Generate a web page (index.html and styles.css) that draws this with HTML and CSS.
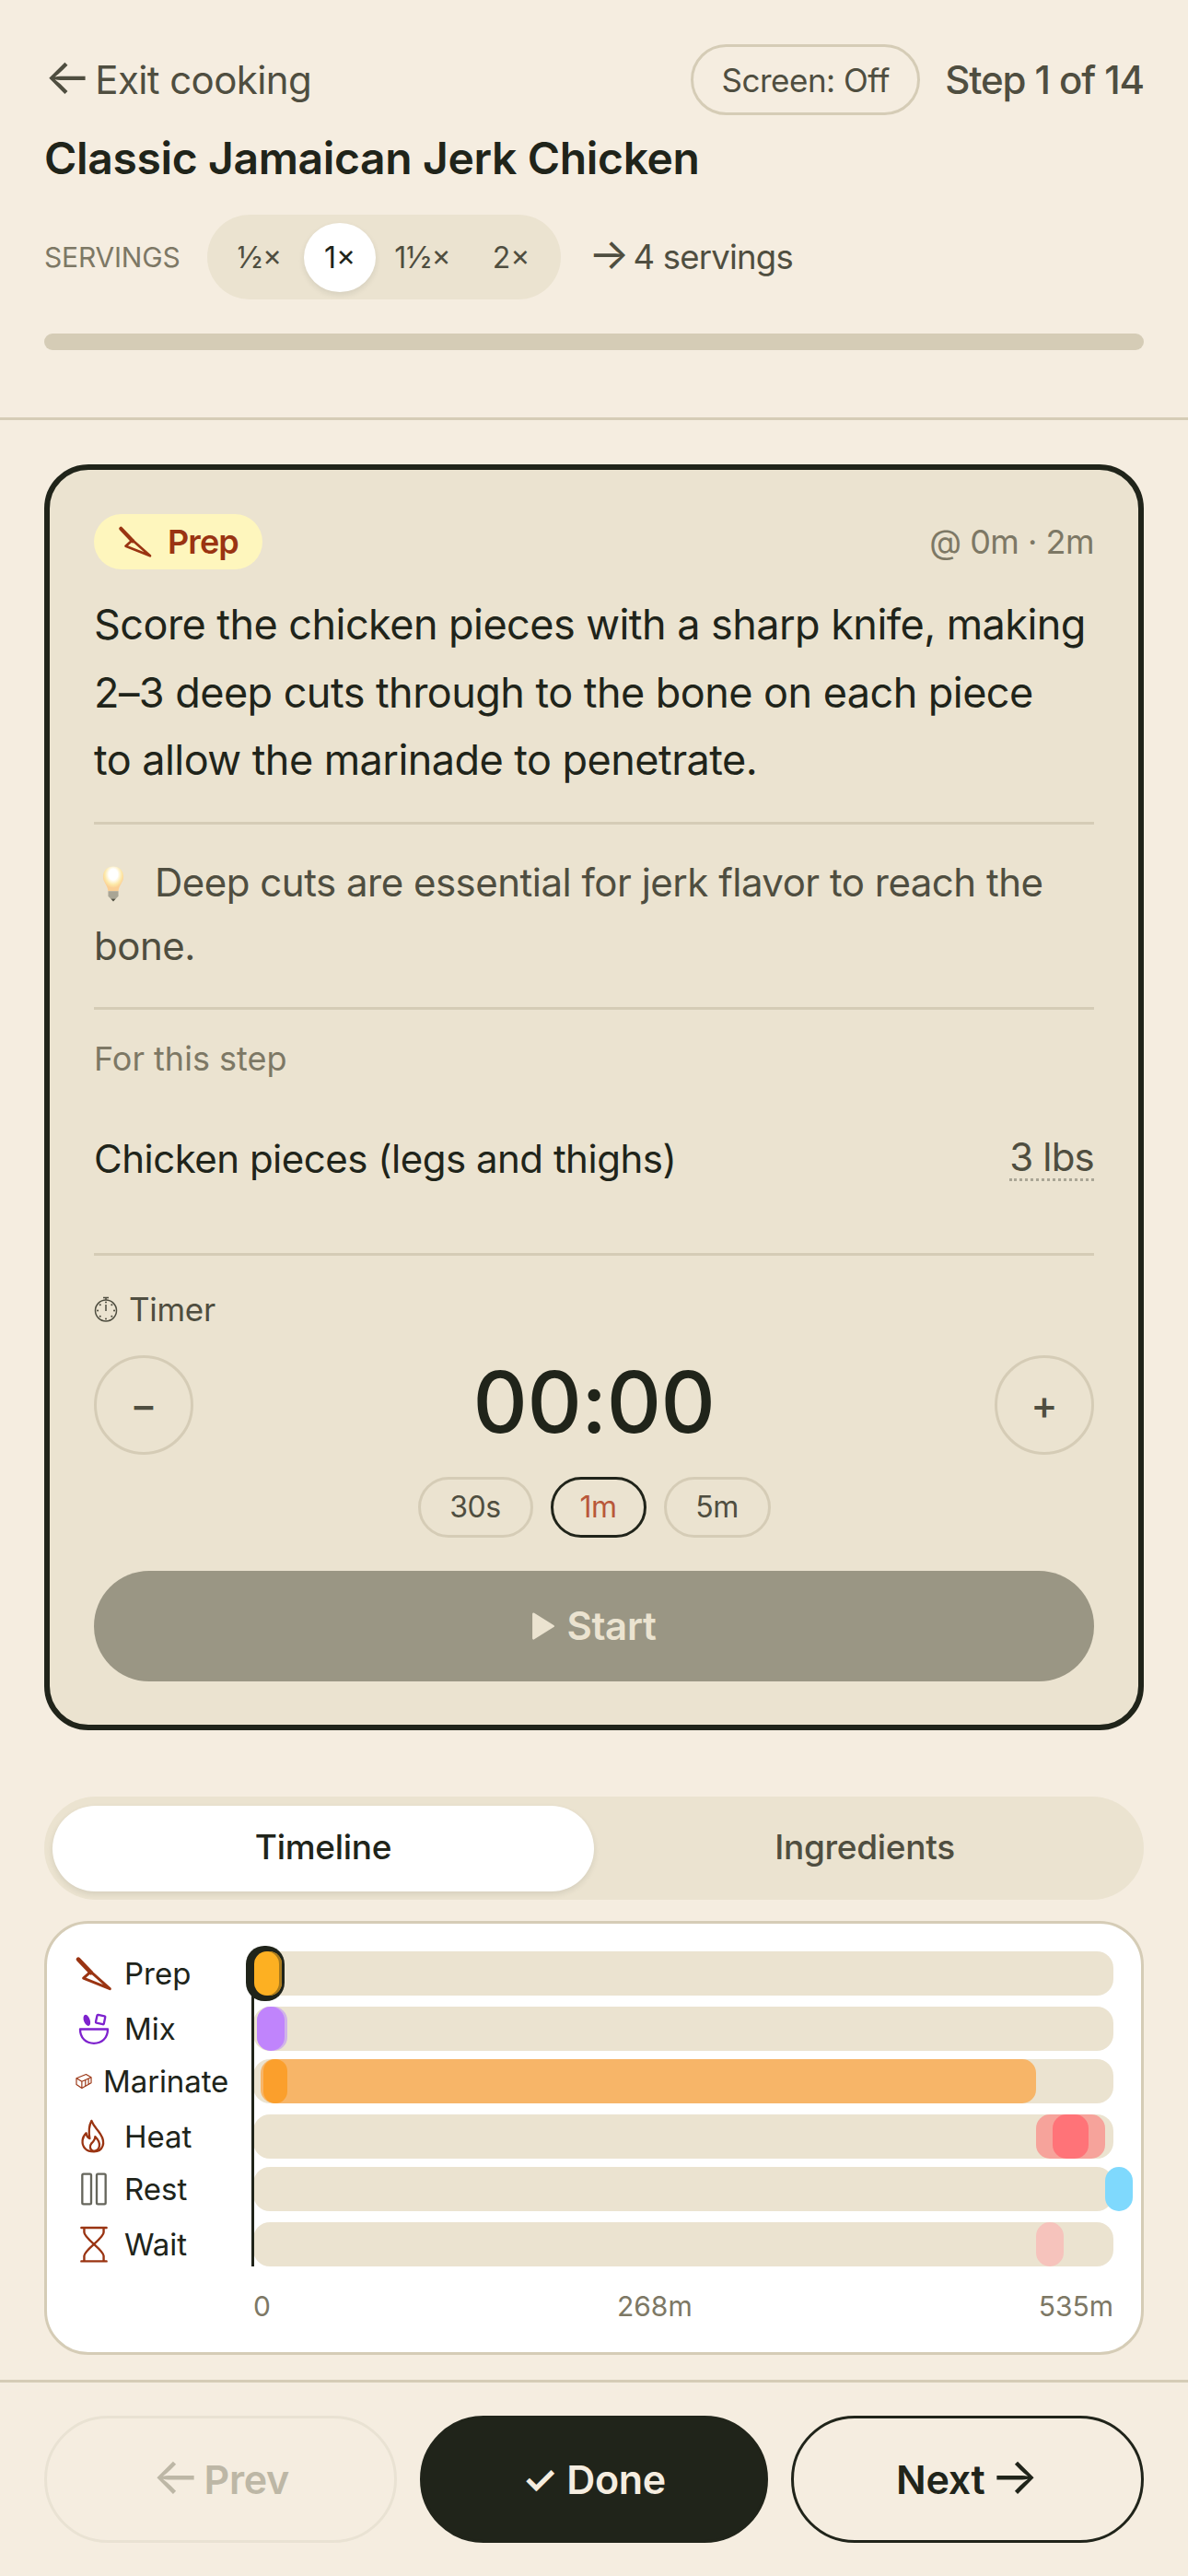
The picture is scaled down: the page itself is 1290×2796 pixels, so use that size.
FILE: index.html
```html
<!DOCTYPE html>
<html lang="en">
<head>
<meta charset="utf-8">
<title>Cooking mode</title>
<link rel="stylesheet" href="styles.css">
</head>
<body>
<svg class="defs" width="0" height="0" aria-hidden="true">
  <symbol id="knife" viewBox="125 160 125 115">
    <path d="M136 171 178 215" fill="none" stroke="currentColor" stroke-width="14" stroke-linecap="round"/>
    <path d="M177 212 153 233 240 268Z" fill="none" stroke="currentColor" stroke-width="9" stroke-linejoin="round"/>
  </symbol>
</svg>
<div class="app">
  <header class="top">
    <div class="top-row">
      <span class="exit"><span class="arrow arrow--lead">←</span>Exit cooking</span>
      <div class="top-right">
        <span class="screen">Screen: Off</span>
        <span class="step">Step 1 of 14</span>
      </div>
    </div>
    <h1 class="title">Classic Jamaican Jerk Chicken</h1>
    <div class="servings">
      <span class="servings-label">SERVINGS</span>
      <div class="scale">
        <span class="scale-opt">½×</span>
        <span class="scale-opt scale-opt--on">1×</span>
        <span class="scale-opt">1½×</span>
        <span class="scale-opt">2×</span>
      </div>
      <span class="servings-result"><span class="arrow arrow--lead">→</span>4 servings</span>
    </div>
    <div class="progress"></div>
  </header>

  <main class="main">
    <section class="card">
      <div class="card-head">
        <span class="badge"><svg class="badge-icon"><use href="#knife"/></svg>Prep</span>
        <span class="when">@ 0m · 2m</span>
      </div>
      <p class="instruction">Score the chicken pieces with a sharp knife, making 2–3 deep cuts through to the bone on each piece<br>to allow the marinade to penetrate.</p>
      <p class="tip"><svg class="bulb" viewBox="0 0 26 42"><defs><radialGradient id="glow" cx=".5" cy=".32" r=".55"><stop offset=".4" stop-color="#fff"/><stop offset=".75" stop-color="#fde9a8"/><stop offset="1" stop-color="#fbcf94"/></radialGradient></defs><path d="M13 1C6 1 1 6 1 13c0 7 5 9 6 17h12c1-8 6-10 6-17C25 6 20 1 13 1Z" fill="url(#glow)"/><path d="M7 30h12v6l-3 3h-6l-3-3Z" fill="#a9a595"/><path d="M10 39h6l-3 3Z" fill="#4f4e40"/></svg>Deep cuts are essential for jerk flavor to reach the bone.</p>
      <div class="ingredients">
        <div class="section-label">For this step</div>
        <div class="ingredient"><span>Chicken pieces (legs and thighs)</span><span class="qty">3 lbs</span></div>
      </div>
      <div class="timer">
        <div class="timer-label"><svg class="watch" viewBox="0 0 26 28" fill="none" stroke="currentColor"><circle cx="13" cy="15.5" r="11.5" stroke-width="1.5"/><path d="M10 1.5h6M13 2v2M13 9v7" stroke-width="1.5"/><path d="M13 6.5v.1M13 24.4v.1M4 15.5h.1M22 15.5h.1M6.700 9.200h.1M19.300 9.200h.1M6.700 21.800h.1M19.300 21.800h.1" stroke-width="2" stroke-linecap="round"/></svg>Timer</div>
        <div class="timer-main">
          <button class="round">−</button>
          <span class="clock">00:00</span>
          <button class="round">+</button>
        </div>
        <div class="chips">
          <span class="chip chip--a">30s</span>
          <span class="chip chip--b chip--on">1m</span>
          <span class="chip chip--c">5m</span>
        </div>
        <button class="start"><svg class="play" viewBox="0 0 28 34"><path d="M2 2 26 17 2 32Z" fill="currentColor" stroke="currentColor" stroke-width="3" stroke-linejoin="round"/></svg>Start</button>
      </div>
    </section>

    <div class="tabs">
      <span class="tab tab--on">Timeline</span>
      <span class="tab">Ingredients</span>
    </div>

    <section class="timeline">
      <div class="chart">
        <div class="playhead"></div>
        <div class="row">
          <div class="label"><svg class="ico ico--prep"><use href="#knife"/></svg>Prep</div>
          <div class="track">
            <div class="now"><i class="now-fill"></i></div>
          </div>
        </div>
        <div class="row">
          <div class="label"><svg class="ico ico--mix" viewBox="135 340 102 110"><ellipse cx="163" cy="366" rx="10" ry="19" transform="rotate(-20 163 366)" fill="currentColor"/><rect x="194" y="350" width="27" height="27" rx="3" transform="rotate(12 207 363)" fill="none" stroke="currentColor" stroke-width="7"/><path d="M141 395H231C231 424 212 441 186 441 160 441 141 424 141 395Z" fill="none" stroke="currentColor" stroke-width="7" stroke-linejoin="round"/></svg>Mix</div>
          <div class="track">
            <div class="seg seg--mix-edge" style="left:4px;width:33px"></div>
            <div class="seg seg--mix" style="left:4px;width:30px"></div>
          </div>
        </div>
        <div class="row row--tight">
          <div class="label label--small"><svg class="ico ico--marinate" viewBox="125 540 55 54" fill="none" stroke="currentColor" stroke-width="3.500" stroke-linejoin="round"><path d="M128 557 160 544 177 554 177 572 146 590 128 578Z"/><path d="M128 557 146 568 177 554M146 568V590M158 562V583M168 558V577"/></svg>Marinate</div>
          <div class="track">
            <div class="seg seg--marinate" style="left:8px;width:842px"></div>
            <div class="seg seg--marinate-hot" style="left:11px;width:26px"></div>
          </div>
        </div>
        <div class="row">
          <div class="label"><svg class="ico ico--heat" viewBox="140 692 92 115" fill="none" stroke="currentColor" stroke-width="7" stroke-linejoin="round"><path d="M178 697C186 718 196 722 208 742 226 770 216 800 186 800 160 800 146 784 148 762 149 752 154 744 160 738 162 750 166 754 172 756 168 734 168 716 178 697Z"/><path d="M185 798C172 794 170 782 178 772 186 764 190 758 190 750 200 760 206 772 204 782 202 792 194 798 185 798Z"/></svg>Heat</div>
          <div class="track">
            <div class="seg seg--heat" style="left:850px;width:75px"></div>
            <div class="seg seg--heat-hot" style="left:868px;width:39px"></div>
          </div>
        </div>
        <div class="row row--tight">
          <div class="label"><svg class="ico ico--rest" viewBox="142 864 88 108" fill="none" stroke="currentColor" stroke-width="7"><rect x="148" y="869" width="29" height="98" rx="4"/><rect x="195" y="869" width="29" height="98" rx="4"/></svg>Rest</div>
          <div class="track">
            <div class="seg seg--rest" style="left:925px;width:30px"></div>
          </div>
        </div>
        <div class="row">
          <div class="label"><svg class="ico ico--wait" viewBox="142 1040 88 116" fill="none" stroke="currentColor" stroke-width="7" stroke-linecap="round"><path d="M146 1045H226M146 1152H226M155 1047V1060C155 1080 217 1115 217 1135V1150M217 1047V1060C217 1080 155 1115 155 1135V1150"/></svg>Wait</div>
          <div class="track">
            <div class="seg seg--wait" style="left:850px;width:30px"></div>
          </div>
        </div>
      </div>
      <div class="axis"><span>0</span><span>268m</span><span>535m</span></div>
    </section>
  </main>

  <footer class="foot">
    <button class="nav nav--prev"><span class="arrow arrow--lead">←</span>Prev</button>
    <button class="nav nav--done">✓ Done</button>
    <button class="nav nav--next">Next<span class="arrow arrow--trail">→</span></button>
  </footer>
</div>
</body>
</html>
```

FILE: styles.css
```css
* { box-sizing: border-box; }
html, body { margin: 0; padding: 0; }
body { background: #f5ede0; color: #20241a; font-family: Inter, "Noto Sans", sans-serif; }
button { font-family: inherit; cursor: pointer; }
.defs { position: absolute; }
.app { width: 1290px; height: 2796px; display: flex; flex-direction: column; }
.arrow { font-size: 1.28em; line-height: 0; font-weight: 400; letter-spacing: 0; }
.arrow--lead { margin-right: 4px; }
.arrow--trail { margin-left: 6px; }

.top { height: 456px; padding: 48px 48px 0; border-bottom: 3px solid #d5ccb6; }
.top-row { display: flex; justify-content: space-between; align-items: center; height: 77px; }
.exit { font-size: 42px; color: #4f4e40; letter-spacing: -.6px; }
.top-right { display: flex; align-items: center; gap: 27px; }
.screen { height: 77px; width: 249px; display: flex; align-items: center; justify-content: center; border: 3px solid #d5ccb6; border-radius: 39px; font-size: 35px; color: #4f4e40; letter-spacing: -.5px; }
.step { font-size: 42px; font-weight: 500; color: #4f4e40; letter-spacing: -1.1px; }
.title { margin: 17px 0 0; font-size: 48px; line-height: 60px; font-weight: 600; letter-spacing: -.35px; }
.servings { display: flex; align-items: center; margin-top: 31px; }
.servings-label { width: 177px; font-size: 30px; color: #7d7865; letter-spacing: -.2px; }
.scale { width: 384px; height: 92px; border-radius: 46px; background: #ebe3d0; display: grid; grid-template-columns: 96px 78px 102px 90px; align-items: center; padding: 0 9px; }
.scale-opt { height: 75px; display: flex; align-items: center; justify-content: center; font-size: 32px; color: #4f4e40; }
.scale-opt--on { background: #fff; color: #20241a; border-radius: 50%; box-shadow: 0 3px 6px rgba(32,36,26,.1); }
.servings-result { margin-left: 30px; font-size: 36.5px; color: #4f4e40; letter-spacing: -.8px; }
.progress { height: 18px; margin-top: 37px; border-radius: 9px; background: #d5ccb6; }

.main { padding: 48px 48px 0; flex: 1; }
.card { height: 1374px; background: #ebe3d0; border: 6px solid #20241a; border-radius: 48px; padding: 48px 48px 0; }
.card-head { display: flex; justify-content: space-between; align-items: center; height: 60px; }
.badge { height: 60px; width: 183px; padding-left: 26px; display: flex; align-items: center; gap: 16px; background: #fef6bd; color: #9a3412; border-radius: 30px; font-size: 36px; font-weight: 600; letter-spacing: -.9px; }
.badge-icon { width: 38px; height: 36px; flex: none; }
.when { font-size: 36px; color: #7d7865; letter-spacing: -.5px; }
.instruction { margin: 23px 0 0; font-size: 45px; line-height: 73.5px; letter-spacing: -.55px; padding-bottom: 30px; border-bottom: 3px solid #d5ccb6; }
.tip { margin: 0; padding: 28px 0 31px; font-size: 42px; line-height: 69.5px; color: #4f4e40; letter-spacing: -.5px; border-bottom: 3px solid #d5ccb6; }
.bulb { width: 24px; height: 40px; margin: 0 33px 0 9px; vertical-align: -6px; }
.ingredients { padding-top: 26px; height: 267px; border-bottom: 3px solid #d5ccb6; }
.section-label { font-size: 36px; line-height: 54px; color: #7d7865; }
.ingredient { margin-top: 55px; display: flex; justify-content: space-between; font-size: 42px; line-height: 54px; letter-spacing: -.5px; }
.qty { color: #4f4e40; border-bottom: 3px dotted #a9a595; height: 51px; line-height: 50px; letter-spacing: -.8px; }
.timer { padding-top: 31px; }
.timer-label { display: flex; align-items: center; gap: 12px; font-size: 35px; line-height: 54px; color: #4f4e40; letter-spacing: -.3px; }
.watch { width: 26px; height: 28px; }
.timer-main { margin-top: 23px; display: flex; justify-content: space-between; align-items: center; height: 108px; }
.round { width: 108px; height: 108px; border-radius: 50%; border: 3px solid #d5ccb6; background: transparent; color: #4f4e40; font-size: 44px; font-weight: 500; padding: 0; line-height: 1; }
.clock { font-size: 92px; font-weight: 500; letter-spacing: -.5px; line-height: 108px; padding-bottom: 5px; }
.chips { margin-top: 24px; display: flex; justify-content: center; gap: 19px; }
.chip { height: 66px; display: flex; align-items: center; justify-content: center; border: 3px solid #d5ccb6; border-radius: 33px; font-size: 32px; color: #4f4e40; letter-spacing: -.4px; }
.chip--a { width: 125px; }
.chip--b { width: 104px; }
.chip--c { width: 116px; }
.chip--on { border-color: #20241a; color: #b9583a; }
.start { margin-top: 36px; width: 100%; height: 120px; border: 0; border-radius: 60px; background: #9a9684; color: #ebe3d0; font-size: 42px; font-weight: 600; display: flex; align-items: center; justify-content: center; gap: 12px; letter-spacing: -.3px; }
.play { width: 26px; height: 30px; }

.tabs { margin-top: 72px; height: 112px; padding: 10px 9px 9px; background: #ebe3d0; border-radius: 56px; display: grid; grid-template-columns: 588px 1fr; }
.tab { display: flex; align-items: center; justify-content: center; padding-bottom: 5px; font-size: 37px; font-weight: 500; color: #4f4e40; letter-spacing: -.3px; }
.tab--on { background: #fff; color: #20241a; border-radius: 47px; box-shadow: 0 3px 6px rgba(32,36,26,.1); }

.timeline { margin-top: 23px; height: 471px; background: #fff; border: 3px solid #d5ccb6; border-radius: 48px; padding: 30px 30px 0 24px; }
.chart { position: relative; }
.playhead { position: absolute; z-index: 2; left: 198px; top: 48px; bottom: 0; width: 3px; background: #20241a; }
.row { display: flex; height: 48px; margin-bottom: 12px; align-items: center; }
.row:last-child { margin-bottom: 0; }
.row--tight { margin-top: -3px; }
.label { flex: 0 0 200px; display: flex; align-items: center; gap: 12px; padding-left: 6px; font-size: 33px; letter-spacing: 0; white-space: nowrap; }
.label--small { gap: 12px; padding-left: 7px; letter-spacing: -.1px; }
.track { position: relative; width: 934px; height: 48px; background: #ebe3d0; border-radius: 18px; }
.ico { flex: none; width: 42px; height: 38px; }
.ico--prep { color: #9a3412; }
.ico--mix { color: #7e22ce; width: 34px; height: 37px; margin: 0 4px; }
.ico--marinate { color: #9a3412; width: 18px; height: 18px; }
.ico--heat { color: #9a3412; width: 30px; height: 38px; margin: 0 6px; }
.ico--rest { color: #66665c; width: 30px; height: 36px; margin: 0 6px; }
.ico--wait { color: #9a3412; width: 30px; height: 40px; margin: 0 6px; }
.seg { position: absolute; top: 0; height: 48px; border-radius: 15px; }
.seg--mix { background: #c084fc; }
.seg--mix-edge { background: #d0b3e8; }
.seg--marinate { background: #f7b568; }
.seg--marinate-hot { background: #fb9f2c; }
.seg--heat { background: #f6a39b; }
.seg--heat-hot { background: #ff7378; }
.seg--rest { background: #7fd9fd; }
.seg--wait { background: #f6c3bc; }
.now { position: absolute; z-index: 3; left: -8px; top: -6px; width: 42px; height: 60px; background: #20241a; border-radius: 20px; }
.now-fill { position: absolute; left: 9px; top: 6px; width: 30px; height: 48px; border-radius: 14px; background: #fdb022; box-shadow: inset -3px 0 0 #a87a1d; }
.axis { position: relative; margin: 24px 0 0 200px; width: 934px; display: flex; justify-content: space-between; font-size: 30px; line-height: 38px; color: #7d7865; }

.foot { height: 213px; border-top: 3px solid #d5ccb6; padding: 36px 48px; display: grid; grid-template-columns: 383px 378px 383px; gap: 25px; }
.nav { height: 138px; border-radius: 69px; font-size: 43px; font-weight: 600; letter-spacing: -.3px; background: transparent; border: 3px solid #20241a; color: #20241a; padding: 0; }
.nav--prev { border-color: #e9e2d3; color: #bdb7a6; }
.nav--done { background: #20241a; color: #f5ede0; }
```
